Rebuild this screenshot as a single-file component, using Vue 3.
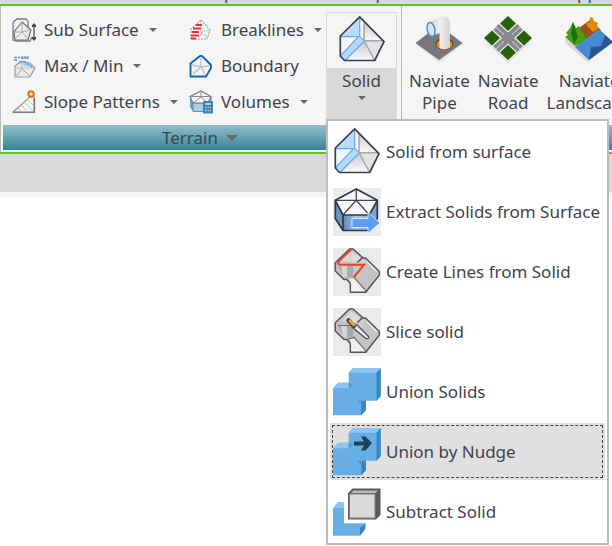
<script setup>
import { ref } from 'vue'

const tabs = [
  { name: 'p', cls: 'tab-a' },
  { name: 'p', cls: 'tab-b' },
  { name: 'pp', cls: 'tab-c' },
]

const tools = [
  { label: 'Sub Surface', icon: 'sub', menu: true },
  { label: 'Breaklines', icon: 'break', menu: true },
  { label: 'Max / Min', icon: 'max', menu: true },
  { label: 'Boundary', icon: 'boundary', menu: false },
  { label: 'Slope Patterns', icon: 'slope', menu: true },
  { label: 'Volumes', icon: 'volumes', menu: true },
]

const apps = [
  { first: 'Naviate', second: 'Pipe', icon: 'pipe' },
  { first: 'Naviate', second: 'Road', icon: 'road' },
  { first: 'Naviate', second: 'Landscape', icon: 'land' },
]

const items = [
  { label: 'Solid from surface', icon: 'solid' },
  { label: 'Extract Solids from Surface', icon: 'extract' },
  { label: 'Create Lines from Solid', icon: 'lines' },
  { label: 'Slice solid', icon: 'slice' },
  { label: 'Union Solids', icon: 'union' },
  { label: 'Union by Nudge', icon: 'nudge' },
  { label: 'Subtract Solid', icon: 'subtract' },
]

const active = ref('nudge')
</script>

<template>
  <div class="window">
    <svg class="defs" aria-hidden="true">
      <defs>
        <linearGradient id="steel" x1="0" y1="0" x2="1" y2="1">
          <stop offset="0" stop-color="#dcdcdd" />
          <stop offset="0.5" stop-color="#c2c3c5" />
          <stop offset="1" stop-color="#e4e4e5" />
        </linearGradient>
        <linearGradient id="pale" x1="0" y1="0" x2="0" y2="1">
          <stop offset="0" stop-color="#c9c9cd" />
          <stop offset="1" stop-color="#fbfbfb" />
        </linearGradient>
        <linearGradient id="side" x1="0" y1="0" x2="1" y2="0">
          <stop offset="0" stop-color="#6288b4" />
          <stop offset="0.5" stop-color="#a3c3e4" />
          <stop offset="1" stop-color="#8db2da" />
        </linearGradient>
        <linearGradient id="tube" x1="0" y1="0" x2="1" y2="0">
          <stop offset="0" stop-color="#cfd0cd" />
          <stop offset="0.5" stop-color="#f1f1ef" />
          <stop offset="1" stop-color="#d3d4d1" />
        </linearGradient>

        <symbol id="i-solid" viewBox="0 0 48 48">
          <path d="M21.700 0.800 46 25.700 36.700 44.500H6.500L2.300 40V20Z" fill="#f6f6f8" />
          <path d="M21.700 1 21.700 20.700H2.300V20Z" fill="#b9dcfb" />
          <path d="M26 5V24L45 25.500Z" fill="url(#pale)" />
          <path d="M26 25H45L36.700 44.500Z" fill="#e3e3e7" />
          <path d="M26 25 36.700 44.500H9Z" fill="url(#pale)" />
          <path d="M20 21 26.300 25.500 7 44.500 2.300 40Z" fill="#b3dafd" />
          <path d="M21.700 1V20.700H2.300M20.500 20.700 2.300 40M21.700 20.700 26.300 25 7 44.500" fill="none" stroke="#62a8f3" stroke-width="1.200" />
          <path d="M26 5V24.700H46M26.300 25 36.700 44.500" fill="none" stroke="#a5a5aa" stroke-width="1.500" />
          <path d="M21.700 0.800 46 25.700 36.700 44.500H6.500L2.300 40V20Z" fill="none" stroke="#3b424d" stroke-width="1.700" stroke-linejoin="round" />
        </symbol>

        <symbol id="i-extract" viewBox="0 0 48 48">
          <rect width="48" height="48" fill="#ebebeb" />
          <path d="M2.300 12.300 10 27V42.500L2.300 30.500Z" fill="#6d93c0" />
          <path d="M44.300 12.300 36.300 27V42.500L44.300 30.500Z" fill="#7fa6d0" />
          <path d="M10 27H36.300V42.500H10Z" fill="url(#side)" />
          <path d="M23.300 1 44.300 12.300 36.300 27H10L2.300 12.300Z" fill="#f7f7f7" />
          <path d="M2.300 12.300H44.300M23.300 1V12.300L10 27M23.300 12.300 36.300 27" fill="none" stroke="#45484d" stroke-width="1.300" />
          <path d="M23.300 1 44.300 12.300V30.500L36.300 42.500H10L2.300 30.500V12.300ZM2.300 12.300 10 27H36.300L44.300 12.300M10 27V42.500" fill="none" stroke="#2d3a49" stroke-width="1.700" stroke-linejoin="round" />
          <path d="M19 30.500H35V24L47 35 35 45.500V39.500H19Z" fill="#5d9cf8" stroke="#f1f6ff" stroke-width="0.800" />
        </symbol>

        <symbol id="i-blocks" viewBox="0 0 48 48">
          <rect width="48" height="48" fill="#ebebeb" />
          <path d="M2.300 14.700 16.500 1H20L29.700 9V31H14L11 31.500 2.300 23Z" fill="#c3c4c6" />
          <path d="M8 13 18 3 28 10 22 15Z" fill="#d9d9da" />
          <path d="M5 18H20V29.500H11Z" fill="#a9aaac" />
          <path d="M8 18H14V29.500L10 29Z" fill="#d6d6d7" />
          <path d="M24 16.500 29.500 10H32.500L46.300 24V27L32.700 44.300H17.300V35.500L14 31.500 20.500 29.500 24 24Z" fill="url(#steel)" />
          <path d="M17.300 31H22L32.500 42V44.300H17.300Z" fill="#f1f1f1" />
          <path d="M32.500 11 46 24 32.700 43 21.500 29.500 31 17Z" fill="#c3c4c6" />
          <path d="M21 29.500 32.700 42.500M32.700 42V44.300" stroke="#77797d" stroke-width="1.200" />
          <path d="M34 13.500 44 23.500" stroke="#e8e8e8" stroke-width="2" />
          <path d="M29.700 9.500 20 1H16.500L2.300 14.700V23L11 31.500H14L17.300 35.500V44.300H32.700L46.300 27V23.500L32.500 10H29L24.500 14.500" fill="none" stroke="#54565a" stroke-width="1.500" stroke-linejoin="round" />
        </symbol>
        <symbol id="i-lines" viewBox="0 0 48 48">
          <use href="#i-blocks" />
          <path d="M19 0.700 5.500 13.500Q4.500 16.700 7 16.700H31L20.700 29.500" fill="none" stroke="#ea442b" stroke-width="2" />
        </symbol>
        <symbol id="i-slice" viewBox="0 0 48 48">
          <use href="#i-blocks" />
          <path d="M5 17.500H18M22 29 14 31.500" stroke="#6a6c70" stroke-width="1.200" />
          <path d="M20 17 24 17 35 28Q37 31 33 30.500L19 19Z" fill="#eef0f2" stroke="#505357" stroke-width="1.400" />
          <path d="M15.500 12.500 21 18" stroke="#4b4540" stroke-width="4.500" stroke-linecap="round" />
          <path d="M17 13 21 17" stroke="#dfa850" stroke-width="2.800" stroke-linecap="round" />
        </symbol>

        <symbol id="i-union" viewBox="0 0 48 48">
          <path d="M15.700 4.700 19.700 0.300H47.700V28L43.700 32.700H33V42L28.300 47.300H0V20.300L5 14.700H15.700Z" fill="#66aee5" />
          <path d="M15.700 4.700 19.700 0.300H47.700L43.500 4.700ZM0 20.300 5 14.700H15.700V20.300Z" fill="#8cc6f2" />
          <path d="M43.500 4.700 47.700 0.300V28L43.500 32.700ZM28.300 32.700H33V42L28.300 47.300Z" fill="#3787c3" />
          <path d="M15.700 14.700V20.300L20 17ZM28.300 32.700 24 32.700 28.300 37Z" fill="#5099d2" />
        </symbol>
        <symbol id="i-nudge" viewBox="0 0 48 48">
          <use href="#i-union" />
          <path d="M21 13.500H31L28 8.500H32.500L39 15 32.500 22.500H28L31 17.500H21Z" fill="#1c4055" />
        </symbol>
        <symbol id="i-subtract" viewBox="0 0 48 48">
          <path d="M0 20.300 5 14.300H11V35.300H32.300V41L27 47.700H0Z" fill="#66aee5" />
          <path d="M0 20.300 5 14.300H11V20.300Z" fill="#8cc6f2" />
          <path d="M27 40 32.300 35.300V41L27 47.700Z" fill="#3787c3" />
          <path d="M15 5.300 19.500 0.500H47.500V27L43 31.500H15Z" fill="#5a5a5a" />
          <path d="M18 5 20.500 2.500H45L42.500 5Z" fill="#b9b9b9" />
          <path d="M16.500 6H42V30H16.500Z" fill="#dadada" stroke="#818181" stroke-width="1" />
        </symbol>

        <symbol id="i-sub" viewBox="0 0 24 24">
          <path d="M1 4 5 1H14L16 3V10M1 4V22L4 23H18L20 19" fill="#efeff0" stroke="#777b80" stroke-width="1.300" />
          <path d="M10 4 19 12 16 22H3L2 14Z" fill="#eceded" stroke="#6d7277" stroke-width="1.200" />
          <path d="M10 4V14L3 21M10 14 16 21M3 14 10 14 18 12" fill="none" stroke="#a5a9ad" stroke-width="1" />
          <path d="M22 7V21" stroke="#565d64" stroke-width="1.300" />
          <path d="M20 7.500 22 5 24 7.500V9H20ZM20 19H24V20.500L22 23 20 20.500Z" fill="#3e454c" />
        </symbol>
        <symbol id="i-max" viewBox="0 0 24 24">
          <path d="M10 7 18 9 23 14 18 23H3V12Z" fill="#ececee" stroke="#989b9f" stroke-width="1.200" />
          <path d="M10 7V15L4 22M10 15 18 22M3 14 10 14 22 14" fill="none" stroke="#b9bcc0" stroke-width="1.200" />
          <path d="M10 7 18 9 21 13 12 12Z" fill="#a8cdec" />
          <path d="M2 3.500H8M2 6H5M10 2V6M13 2V6M16 2V6M9 4H17M7 8 13 8 20 13" fill="none" stroke="#5799d2" stroke-width="1.300" stroke-dasharray="3 1" />
        </symbol>
        <symbol id="i-slope" viewBox="0 0 24 24">
          <path d="M1 22 20 5H22V22Z" fill="#f7f7f7" stroke="#92959a" stroke-width="1.200" />
          <path d="M6 18 10 22M9 15 16 22M12 12 21 21M15 9 21 15" stroke="#c3c5c8" stroke-width="1" />
          <path d="M1 22.300H22.500V8" fill="none" stroke="#777a7e" stroke-width="1.300" />
          <circle cx="19" cy="4" r="2.700" fill="#fff1b4" stroke="#ec6a1a" stroke-width="2" />
        </symbol>
        <symbol id="i-break" viewBox="0 0 24 24">
          <path d="M12 2 21 12 18 21H2V11Z" fill="#f8f6f6" stroke="#999a9d" stroke-width="1.100" stroke-dasharray="2 1" />
          <path d="M12 3V14L19 20M12 14 21 12" fill="none" stroke="#c7c7ca" stroke-width="1.200" />
          <path d="M7 7H13M4 10.500H12M3 14H10M2 17.500H10M2 20.500H7" stroke="#ee3038" stroke-width="2" />
          <path d="M10 19 13 15" stroke="#d2a0a2" stroke-width="1" />
        </symbol>
        <symbol id="i-boundary" viewBox="0 0 24 24">
          <path d="M11 2H13L22 11V14L17 22.500H1.500V9.500Z" fill="#f2f3f5" stroke="#1963b5" stroke-width="1.900" stroke-linejoin="round" />
          <path d="M12 4V13L3 11M12 13 20 12M12 13 16 20M12 13 4 20" fill="none" stroke="#babdc2" stroke-width="1.300" />
        </symbol>
        <symbol id="i-volumes" viewBox="0 0 24 24">
          <path d="M1 7 4 13V21L1 17Z" fill="#6f9cbd" />
          <path d="M4 13H19L22 7V17L18 21.500H4Z" fill="#a8d0e8" stroke="#6890ad" stroke-width="1" />
          <path d="M12 1 22 6.500 19 13H4L1 6.500Z" fill="#f7f7f7" stroke="#73787e" stroke-width="1.200" />
          <path d="M1 6.500H22M12 1V7L4 13M12 7 19 13" fill="none" stroke="#8a8e93" stroke-width="1" />
          <rect x="14.500" y="11.500" width="9" height="11.500" fill="#397db6" stroke="#4b83b1" stroke-width="1" />
          <path d="M16 14H22" stroke="#a7d7f7" stroke-width="2" />
          <path d="M16 17.500H22M16 20.500H22" stroke="#b7d3e9" stroke-width="1.300" stroke-dasharray="1.500 1" />
        </symbol>

        <symbol id="i-pipe" viewBox="0 0 48 48">
          <path d="M24 9 48 28 24 47 0 28Z" fill="#e2e2e2" />
          <path d="M24 9 47.500 27 24 44 0.500 27Z" fill="#77787b" />
          <ellipse cx="29.500" cy="28" rx="9" ry="6" fill="#6a3a12" />
          <ellipse cx="29.500" cy="28.500" rx="8" ry="5" fill="#ed8b22" />
          <path d="M15 6 25 1Q35 -2 35 8V31Q30 35 24.500 32V17L18 20Z" fill="url(#tube)" />
          <ellipse cx="16" cy="13.500" rx="3.800" ry="7.200" transform="rotate(-12 16 13.500)" fill="#d7e3ed" stroke="#4c8fc9" stroke-width="1.500" />
        </symbol>
        <symbol id="i-road" viewBox="0 0 48 48">
          <path d="M24 4 47 25 24 47 1 25Z" fill="#dedede" />
          <path d="M24 0 48 22 24 44 0 22Z" fill="#ececeb" />
          <path d="M24 0 32 7.500 24 15 16 7.500ZM8 14.500 16 22 8 29.500 0 22ZM40 14.500 48 22 40 29.500 32 22ZM24 29 32 36.500 24 44 16 36.500Z" fill="#27610c" />
          <path d="M12 11 36 33M36 11 12 33" stroke="#88898c" stroke-width="8" />
          <path d="M12 11 20 18.500M28 25.500 36 33M36 11 28 18.500M20 25.500 12 33" stroke="#dededf" stroke-width="0.900" />
        </symbol>
        <symbol id="i-land" viewBox="0 0 48 48">
          <path d="M0 22V27L24 47 25 42Z" fill="#d7d8da" />
          <path d="M14 12 25 4 36 14 20 28Z" fill="#97501e" />
          <path d="M21 6 24 7 25 1 28 2 29 5 33 7 32 10 34 12 28 16 22 10Z" fill="#eb850c" />
          <path d="M0 21 3 19 1 17 5 12 8 6 11 12 14 10 17 16 20 20V26L10 30Z" fill="#45a20c" />
          <path d="M8 6 6 18 9 28 13 21Z" fill="#226c0d" />
          <path d="M10 31 34 13 48 26 24 44Z" fill="#468bd0" />
          <path d="M24 44 26 31 36 30 40 19 48 26Z" fill="#25598f" />
        </symbol>
      </defs>
    </svg>

    <nav class="tabs">
      <a v-for="tab in tabs" :key="tab.cls" href="#" :class="tab.cls">{{ tab.name }}</a>
    </nav>

    <header class="ribbon">
      <section class="panel">
        <div class="panel-body">
          <div class="tools">
            <button v-for="tool in tools" :key="tool.icon" type="button" class="tool">
              <svg class="small-icon" aria-hidden="true"><use :href="'#i-' + tool.icon" /></svg>
              <span>{{ tool.label }}</span>
              <i v-if="tool.menu" class="caret"></i>
            </button>
          </div>
          <div class="split">
            <button type="button" class="split-button" aria-haspopup="menu" aria-expanded="true">
              <span class="split-top"><svg class="large-icon" aria-hidden="true"><use href="#i-solid" /></svg></span>
              <span class="split-bottom">Solid<i class="caret"></i></span>
            </button>
            <div class="menu" role="menu">
              <button
                v-for="item in items"
                :key="item.icon"
                type="button"
                role="menuitem"
                class="menu-item"
                :class="{ active: active === item.icon }"
                @mouseenter="active = item.icon"
              >
                <svg class="large-icon" aria-hidden="true"><use :href="'#i-' + item.icon" /></svg>
                <span>{{ item.label }}</span>
              </button>
            </div>
          </div>
        </div>
        <button type="button" class="panel-title">Terrain<i class="caret wide"></i></button>
      </section>

      <section class="panel apps-panel">
        <div class="apps">
          <button v-for="app in apps" :key="app.icon" type="button" class="app">
            <svg class="large-icon" aria-hidden="true"><use :href="'#i-' + app.icon" /></svg>
            <span>{{ app.first }}</span>
            <span>{{ app.second }}</span>
          </button>
        </div>
        <div class="panel-title"></div>
      </section>
    </header>

    <div class="below"></div>
  </div>
</template>

<style>
body {
  background: #fff;
}
</style>

<style scoped>
.window {
  min-height: 100vh;
  overflow: hidden;
  font-family: "Noto Sans", "Open Sans", sans-serif;
  font-size: 17px;
  line-height: 22px;
  color: #42434c;
}

.defs {
  position: absolute;
  width: 0;
  height: 0;
}

button {
  margin: 0;
  padding: 0;
  border: 0;
  background: none;
  font: inherit;
  color: inherit;
  text-align: left;
  white-space: nowrap;
}

.tabs {
  display: flex;
  align-items: flex-end;
  height: 4px;
  overflow: hidden;
  background: #d9d9d9;
}

.tabs a {
  color: inherit;
  text-decoration: none;
}

.tab-a {
  padding-left: 224px;
}

.tab-b {
  padding-left: 141px;
}

.tab-c {
  padding-left: 191px;
}

.ribbon {
  display: flex;
  background: #f5f5f5;
  border-top: 2px solid #5fc41f;
  border-bottom: 2px solid #5fc41f;
}

.panel {
  display: flex;
  flex: none;
  flex-direction: column;
  box-sizing: border-box;
  width: 402px;
  padding: 0 4px 2px 2px;
  border-left: 1px solid #b4bfae;
  border-right: 1px solid #9fca8a;
}

.apps-panel {
  flex: 1;
  min-width: 0;
  padding: 0 0 2px 2px;
  border: 0;
}

.panel-body {
  display: flex;
  justify-content: space-between;
  height: 119px;
}

.tools {
  display: grid;
  grid-template-columns: 177px 130px;
  grid-auto-rows: 36px;
  padding: 6px 0 0 9px;
}

.tool {
  display: flex;
  align-items: center;
}

.small-icon {
  flex: none;
  width: 24px;
  height: 24px;
  margin-right: 8px;
}

.large-icon {
  display: block;
  flex: none;
  width: 48px;
  height: 48px;
}

.caret {
  width: 0;
  height: 0;
  border: 4px solid transparent;
  border-top-color: #666;
  border-bottom: 0;
}

.tool .caret {
  margin-left: 10px;
}

.caret.wide {
  border-width: 6px 6px 0;
  margin-left: 8px;
}

.split {
  position: relative;
  width: 71px;
  padding-top: 6px;
}

.split-button {
  display: block;
  box-sizing: border-box;
  width: 100%;
  height: 107px;
  border: 1px solid #d9d9d9;
  background: #d9d9d9;
}

.split-top {
  display: flex;
  justify-content: center;
  padding: 3px 0 4px;
  background: #f5f5f5;
}

.split-bottom {
  display: flex;
  flex-direction: column;
  align-items: center;
  gap: 4px;
  height: 50px;
  padding-top: 2px;
  box-sizing: border-box;
}

.menu {
  position: absolute;
  z-index: 2;
  top: 100%;
  left: 0;
  display: grid;
  gap: 3px;
  box-sizing: border-box;
  width: 283px;
  margin-top: -6px;
  padding: 2px 2px 3px;
  border: 2px solid #bcbcbc;
  background: #fff;
}

.menu-item {
  display: flex;
  align-items: center;
  gap: 5px;
  height: 57px;
  padding: 0 3px;
}

.menu-item.active {
  background: #e0e0e0;
  outline: 1px dashed #444;
  outline-offset: -3px;
}

.panel-title {
  display: flex;
  align-items: center;
  justify-content: center;
  width: 100%;
  height: 25px;
  background: linear-gradient(#93bfcc, #35849a);
}

.apps {
  display: flex;
  gap: 8px;
  height: 119px;
  padding-top: 10px;
  padding-left: 5px;
  box-sizing: border-box;
  overflow: hidden;
}

.app {
  display: flex;
  flex: none;
  flex-direction: column;
  align-items: center;
}

.app .large-icon {
  margin-bottom: 6px;
}

.below {
  height: 38px;
  background: #d9d9d9;
  border-bottom: 5px solid #f5f5f5;
}
</style>
